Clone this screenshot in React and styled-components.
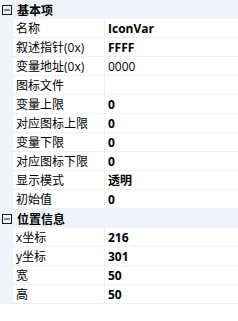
import React from 'react';
import styled, { createGlobalStyle } from 'styled-components';

const GlobalStyle = createGlobalStyle`
  html, body {
    margin: 0;
    padding: 0;
    background: #ffffff;
  }
  body {
    font-family: "Open Sans", "Noto Sans CJK SC", sans-serif;
    font-size: 12px;
    color: #000;
  }
`;

const sections = [
  {
    title: '基本项',
    rows: [
      ['名称', 'IconVar', true],
      ['叙述指针(0x)', 'FFFF', true],
      ['变量地址(0x)', '0000', false],
      ['图标文件', '', false],
      ['变量上限', '0', true],
      ['对应图标上限', '0', true],
      ['变量下限', '0', true],
      ['对应图标下限', '0', true],
      ['显示模式', '透明', true],
      ['初始值', '0', true],
    ],
  },
  {
    title: '位置信息',
    rows: [
      ['x坐标', '216', true],
      ['y坐标', '301', true],
      ['宽', '50', true],
      ['高', '50', true],
    ],
  },
];

const Grid = styled.div`
  width: 238px;
  display: flex;
  flex-direction: column;
`;

const Header = styled.div`
  height: 19px;
  background: #f0f4fa;
  display: flex;
  align-items: center;
  gap: 5px;
  padding-left: 2px;
  font-family: "Noto Sans CJK SC", sans-serif;
  font-weight: 700;
  font-size: 12px;
`;

const Row = styled.div`
  height: 19px;
  display: grid;
  grid-template-columns: 13px 92px 1fr;
  background: #f0f4fa;
`;

const Name = styled.div`
  background: #fff;
  border-bottom: 1px solid #edf0f5;
  border-right: 1px solid #edf0f5;
  display: flex;
  align-items: center;
  padding-left: 3px;
  font-family: "Open Sans", "Noto Sans CJK SC", sans-serif;
  white-space: nowrap;
  overflow: hidden;
`;

const Value = styled.div`
  background: #fff;
  border-bottom: 1px solid #edf0f5;
  display: flex;
  align-items: center;
  padding-left: 3px;
  font-family: "Open Sans", "Noto Sans CJK SC", sans-serif;
  font-weight: ${(p) => (p.$bold ? 700 : 400)};
`;

const Toggle = () => (
  <svg width="10" height="10" viewBox="0 0 10 10">
    <rect x="0.5" y="0.5" width="9" height="9" fill="none" stroke="#1a1a1a" />
    <line x1="2" y1="5" x2="8" y2="5" stroke="#1a1a1a" />
  </svg>
);

const App = () => (
  <>
    <GlobalStyle />
    <Grid>
      {sections.map((s) => (
        <React.Fragment key={s.title}>
          <Header>
            <Toggle />
            {s.title}
          </Header>
          {s.rows.map(([name, value, bold]) => (
            <Row key={name}>
              <div />
              <Name>{name}</Name>
              <Value $bold={bold}>{value}</Value>
            </Row>
          ))}
        </React.Fragment>
      ))}
    </Grid>
  </>
);

export default App;
